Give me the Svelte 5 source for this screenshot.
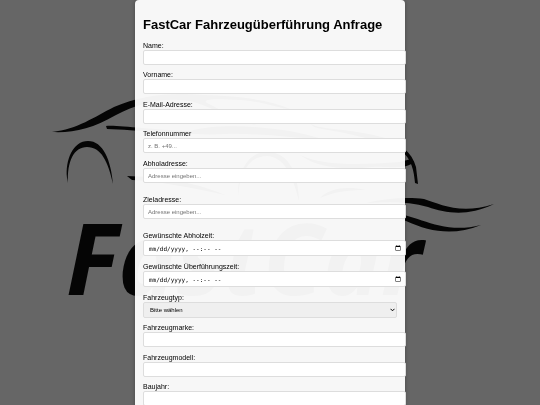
<script>
    const fields = [
        { id: "name", label: "Name:", type: "text" },
        { id: "vorname", label: "Vorname:", type: "text" },
        { id: "email", label: "E-Mail-Adresse:", type: "email" },
        { id: "telefon", label: "Telefonnummer", type: "tel", hint: "z. B. +49..." },
        { id: "abholadresse", label: "Abholadresse:", type: "text", hint: "Adresse eingeben...", kind: "adresse" },
        { id: "zieladresse", label: "Zieladresse:", type: "text", hint: "Adresse eingeben...", kind: "adresse" },
        { id: "abholzeit", label: "Gewünschte Abholzeit:", type: "datetime-local", kind: "zeit" },
        { id: "zielzeit", label: "Gewünschte Überführungszeit:", type: "datetime-local", kind: "zeit" },
        { id: "typ", label: "Fahrzeugtyp:", type: "select" },
        { id: "marke", label: "Fahrzeugmarke:", type: "text" },
        { id: "modell", label: "Fahrzeugmodell:", type: "text" },
        { id: "baujahr", label: "Baujahr:", type: "text" },
    ];
    const typen = ["PKW", "Transporter", "LKW"];
</script>

<div class="page">
    <svg class="logo" viewBox="0 0 540 405" preserveAspectRatio="xMidYMid slice" aria-hidden="true">
        <!-- Dach und Haube -->
        <path d="M52 132C78 129 94 117 114 107C140 96 168 92 203 95C240 96 270 100 290 109C284 110 262 101 240 100C222 99 200 98 207 103C225 112 240 122 262 126C232 122 212 106 190 101C160 97 138 104 116 115C92 129 73 133 52 132Z" />
        <path d="M106 126C120 125 150 130 190 131C215 124 250 126 275 129C295 131 312 136 322 139C290 138 262 133 225 134C190 136 140 130 107 129Z" />
        <path d="M311 124C320 130 350 128 385 138C399 143 412 152 416 167L418 184L415 183C414 172 412 158 400 150C375 138 340 132 322 129C316 128 312 126 311 124Z" />
        <path d="M300 155C322 166 360 165 400 162L411 159L414 162C406 170 388 166 372 167C344 170 318 168 300 155Z" />
        <path d="M127 176C155 177 190 180 225 195C190 187 155 181 132 180Z" />
        <path d="M320 198C330 188 347 186 365 190C347 190 334 192 320 198Z" />
        <!-- Räder -->
        <path d="M68 183L67 178C65 160 73 141 88 141C103 141 111 160 113 184C108 161 101 147 87 147C74 147 67 161 68 183Z" />
        <path d="M238 196C238 168 250 152 267 152C286 152 298 168 299 201C292 172 283 157 267 156C250 156 240 171 238 196Z" />
        <!-- Fahrtwind -->
        <path d="M366 203C388 198 408 197 424 199C440 204 460 215 494 204C467 217 446 213 428 207C408 201 388 202 366 203Z" />
        <path d="M385 213C415 211 438 236 481 225C454 236 430 232 406 221C399 218 392 215 385 213Z" />
        <text x="66" y="295">FastCar</text>
    </svg>
    <main class="container">
        <h1>FastCar Fahrzeugüberführung Anfrage</h1>
        <form>
            {#each fields as field}
                <div class="field {field.kind ?? ''}">
                    <label for={field.id}>{field.label}</label>
                    {#if field.type === "select"}
                        <div class="auswahl">
                            <select id={field.id}>
                                <option value="">Bitte wählen</option>
                                {#each typen as typ}
                                    <option>{typ}</option>
                                {/each}
                            </select>
                            <svg viewBox="0 0 5 4" aria-hidden="true">
                                <path d="M0.5 0.8L2.5 2.8L4.5 0.8" />
                            </svg>
                        </div>
                    {:else}
                        <input id={field.id} type={field.type} placeholder={field.hint} />
                    {/if}
                </div>
            {/each}
        </form>
    </main>
</div>

<style>
    :global(body) {
        margin: 0;
        background: #666;
        font-family: "Liberation Sans", Arial, sans-serif;
    }
    .page {
        height: 100vh;
        overflow: hidden;
    }
    .logo {
        position: fixed;
        inset: 0;
        width: 100%;
        height: 100%;
        fill: #050505;
    }
    .logo text {
        font: italic bold 98px "Noto Sans", "Open Sans", sans-serif;
    }
    .container {
        position: relative;
        box-sizing: border-box;
        width: 50%;
        margin: 0 auto;
        padding: 17px 8px;
        border-radius: 4px;
        background: rgba(255, 255, 255, 0.95);
        box-shadow: 0 0 4px rgba(0, 0, 0, 0.3);
    }
    h1 {
        margin: 0 0 8px;
        font-size: 13px;
        line-height: 16px;
        white-space: nowrap;
    }
    .field {
        margin-bottom: 6px;
    }
    .field:nth-child(odd) {
        margin-bottom: 5px;
    }
    .field.adresse {
        margin-bottom: 12px;
    }
    .field.zeit {
        margin-bottom: 6px;
    }
    label {
        display: block;
        height: 9px;
        font-size: 7px;
        line-height: 9px;
    }
    input,
    select {
        display: block;
        box-sizing: border-box;
        height: 16px;
        border: 1px solid #ddd;
        border-radius: 2px;
        font-size: 6px;
    }
    input {
        /* etwas breiter als der Container */
        width: calc(100% + 9px);
        padding: 0 4px;
        background: #fff;
    }
    input:not([type="datetime-local"]) {
        height: 15px;
        font-family: inherit;
    }
    input[type="datetime-local"] {
        padding: 0 2px 0 5px;
        font-family: "DejaVu Sans Mono", monospace;
    }
    input::-webkit-datetime-edit-month-field,
    input::-webkit-datetime-edit-day-field,
    input::-webkit-datetime-edit-year-field,
    input::-webkit-datetime-edit-hour-field,
    input::-webkit-datetime-edit-minute-field,
    input::-webkit-datetime-edit-ampm-field {
        padding: 0;
    }
    .auswahl {
        position: relative;
    }
    select {
        width: 100%;
        padding: 0 6px;
        appearance: none;
        background: #efefef;
        color: #000;
        font-family: inherit;
    }
    .auswahl svg {
        position: absolute;
        top: 6px;
        right: 2px;
        width: 5px;
        height: 4px;
        fill: none;
        stroke: #000;
        pointer-events: none;
    }
</style>
